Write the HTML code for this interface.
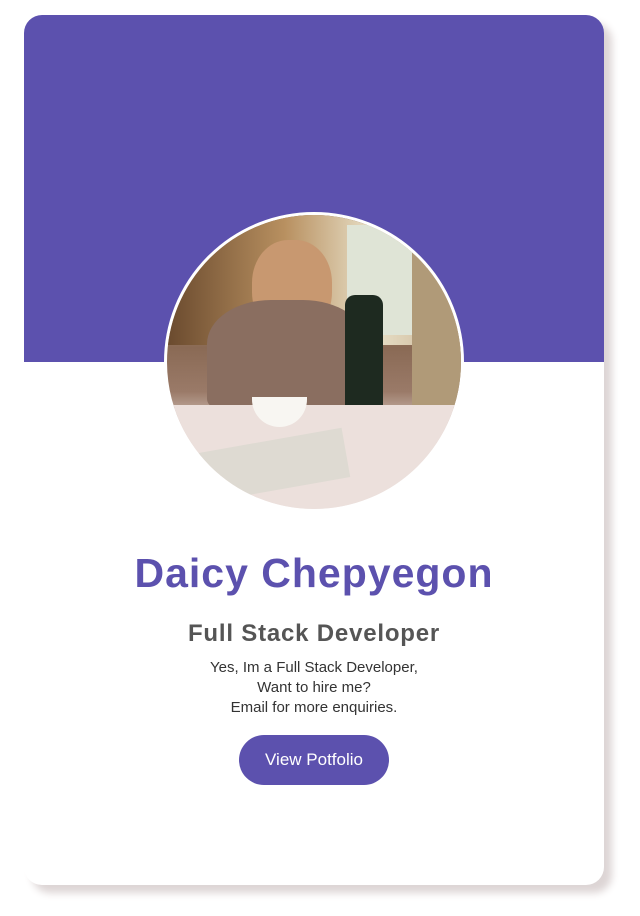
<!DOCTYPE html>
<html><head><meta charset="utf-8"><style>
html,body{margin:0;padding:0;background:#fff;width:640px;height:916px;overflow:hidden}
.card{position:absolute;left:24px;top:15px;width:580px;height:870px;background:#fff;border-radius:18px;box-shadow:8px 8px 8px #ddd5d5;overflow:hidden}
.top{position:absolute;left:0;top:0;width:580px;height:347px;background:#5c51ae}
.av{position:absolute;left:140px;top:197px;width:294px;height:294px;border-radius:50%;border:3px solid #fff;overflow:hidden;
background:linear-gradient(180deg,#7a5a3a 0%,#c9a77a 25%,#8a6a55 45%,#9a7a68 60%,#e8dcd6 75%,#f2ecea 100%)}
.av div{position:absolute}
h1{position:absolute;left:0;width:580px;top:535px;margin:0;text-align:center;font:bold 41px "Liberation Sans",sans-serif;letter-spacing:1px;color:#5c51ae}
h2{position:absolute;left:0;width:580px;top:605px;margin:0;text-align:center;font:bold 24px "Liberation Sans",sans-serif;letter-spacing:0.8px;color:#555}
p{position:absolute;left:0;width:580px;top:643px;margin:0;text-align:center;font:15px/20px "Liberation Sans",sans-serif;color:#333}
.btn{position:absolute;left:215px;top:720px;width:150px;height:50px;border-radius:25px;background:#5c51ae;color:#fff;font:17px/50px "Liberation Sans",sans-serif;text-align:center}
</style></head><body>
<div class="card">
<div class="top"></div>
<div class="av">
<div style="left:0;top:0;width:294px;height:130px;background:linear-gradient(90deg,#6a4a2e,#b89060 40%,#e8e0c8 70%,#c8b090)"></div>
<div style="left:180px;top:10px;width:80px;height:110px;background:#dfe4d6"></div>
<div style="left:85px;top:25px;width:80px;height:95px;border-radius:45%;background:#c89870"></div>
<div style="left:40px;top:85px;width:160px;height:110px;border-radius:40% 40% 10% 10%;background:#8a6e60"></div>
<div style="left:178px;top:80px;width:38px;height:135px;border-radius:10px 10px 4px 4px;background:#1e2a20"></div>
<div style="left:245px;top:30px;width:50px;height:160px;background:#b09a78"></div>
<div style="left:0;top:190px;width:294px;height:110px;background:#ece0dc"></div>
<div style="left:85px;top:182px;width:55px;height:30px;border-radius:0 0 30px 30px;background:#f8f6f2"></div>
<div style="left:35px;top:225px;width:145px;height:50px;background:#dedad2;transform:rotate(-10deg)"></div>
</div>
<h1>Daicy Chepyegon</h1>
<h2>Full Stack Developer</h2>
<p>Yes, Im a Full Stack Developer,<br>Want to hire me?<br>Email for more enquiries.</p>
<div class="btn">View Potfolio</div>
</div>
</body></html>
